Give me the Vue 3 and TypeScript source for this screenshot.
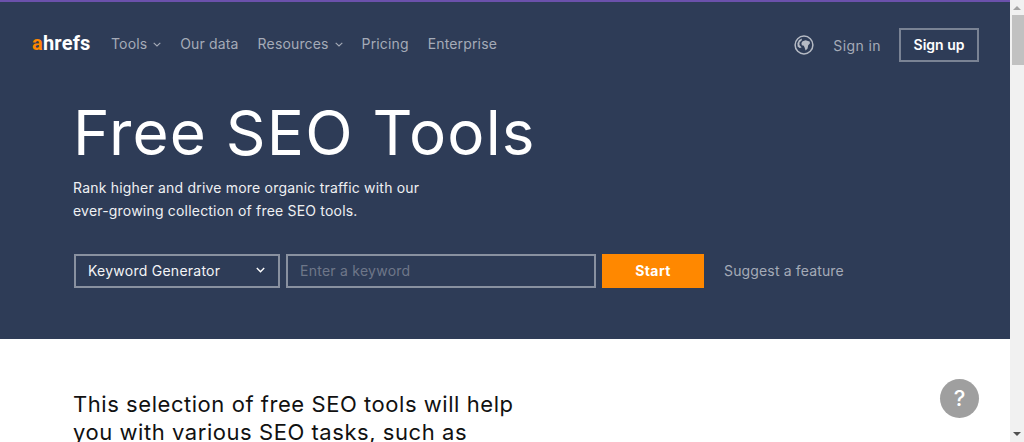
<script setup lang="ts">
const navItems = [
	{ label: "Tools", caret: true },
	{ label: "Our data", caret: false },
	{ label: "Resources", caret: true },
	{ label: "Pricing", caret: false },
	{ label: "Enterprise", caret: false },
];
</script>

<template>
	<div class="window">
		<main class="page">
			<section class="hero">
				<header class="nav">
					<a class="logo"><span class="logo-a">a</span>hrefs</a>
					<nav class="links">
						<a v-for="item in navItems" :key="item.label" class="link">
							{{ item.label }}
							<svg v-if="item.caret" class="caret" width="8" height="5" viewBox="0 0 8 5">
								<path d="M.7.8 4 4 7.3.8" fill="none" stroke="currentColor" stroke-width="1.1" />
							</svg>
						</a>
					</nav>
					<div class="account">
						<svg class="globe" width="20" height="20" viewBox="0 0 20 20">
							<circle cx="10" cy="10" r="8.9" fill="none" stroke="#b5bac4" stroke-width="1.5" />
							<path d="M3.4 8.2 5 5 8 3.6 7.6 5.6 5.6 7.2 5.4 10 7.6 12.4 5.6 13 3.6 11.4Z" fill="#b5bac4" />
							<path d="M8.6 6.2 11.6 5.2 15.6 6.4 16 8.2 14.2 10.2 13.6 13.4 11.6 15.6 10.6 12.6 9.8 10.8 7.8 10.2 7.4 8Z" fill="#b5bac4" />
						</svg>
						<a class="sign-in">Sign in</a>
						<a class="sign-up">Sign up</a>
					</div>
				</header>
				<div class="intro">
					<h1>Free SEO Tools</h1>
					<p>Rank higher and drive more organic traffic with our<br />ever-growing collection of free SEO tools.</p>
					<form class="search" @submit.prevent>
						<div class="select">
							<span>Keyword Generator</span>
							<svg width="9" height="6" viewBox="0 0 9 6">
								<path d="M.8 1 4.500 4.700 8.200 1" fill="none" stroke="#fff" stroke-width="1.4" />
							</svg>
						</div>
						<input class="keyword" type="text" placeholder="Enter a keyword" />
						<button class="start" type="button">Start</button>
						<a class="suggest">Suggest a feature</a>
					</form>
				</div>
			</section>
			<section class="content">
				<h2>This selection of free SEO tools will help you with various SEO tasks, such as</h2>
			</section>
			<button class="help" type="button">?</button>
		</main>
		<aside class="scrollbar">
			<span class="arrow up"></span>
			<span class="thumb"></span>
			<span class="track"></span>
			<span class="arrow down"></span>
		</aside>
	</div>
</template>

<style scoped>
.window {
	display: flex;
	height: 442px;
	overflow: hidden;
	background: #fff;
	font-family: Inter, "Liberation Sans", sans-serif;
}
.page {
	position: relative;
	flex: 1;
	min-width: 0;
	overflow: hidden;
}
.hero {
	height: 337px;
	background: #2e3c57;
	border-top: 2px solid #6b51ab;
}
.nav {
	display: flex;
	align-items: center;
	height: 82px;
	padding: 0 31px 0 32px;
}
.logo {
	width: 79px;
	color: #fff;
	font: 700 20px/1 Roboto, sans-serif;
	letter-spacing: 0.2px;
}
.logo-a {
	color: #ff8800;
}
.links {
	display: flex;
	gap: 19px;
}
.link {
	display: flex;
	align-items: center;
	gap: 6px;
	color: #a5abb7;
	font-size: 14px;
	letter-spacing: 0.15px;
}
.caret {
	margin-top: 2px;
}
.account {
	display: flex;
	align-items: center;
	margin-top: 4px;
	margin-left: auto;
}
.globe {
	margin-right: 19px;
}
.sign-in {
	margin-right: 18px;
	color: #a5abb7;
	font-size: 14px;
	letter-spacing: 0.4px;
}
.sign-up {
	width: 80px;
	height: 34px;
	box-sizing: border-box;
	border: 2px solid #7a8394;
	color: #fff;
	font-size: 14px;
	font-weight: 600;
	line-height: 30px;
	text-align: center;
}
.intro {
	padding: 10px 0 0 73px;
}
h1 {
	margin: 0;
	color: #fff;
	font-size: 62px;
	font-weight: 400;
	line-height: 78px;
	letter-spacing: 1.2px;
}
p {
	margin: 4px 0 0;
	color: #eef0f3;
	font-size: 14px;
	line-height: 23px;
	letter-spacing: 0.2px;
}
.search {
	display: flex;
	align-items: center;
	margin: 32px 0 0 1px;
}
.select,
.keyword {
	height: 34px;
	box-sizing: border-box;
	border: 2px solid #8991a0;
	background: transparent;
	font: 14px Inter, "Liberation Sans", sans-serif;
	letter-spacing: 0.25px;
}
.select {
	display: flex;
	align-items: center;
	justify-content: space-between;
	width: 206px;
	margin-right: 6px;
	padding: 0 13px 2px 12px;
	color: #f3f4f6;
}
.keyword {
	width: 310px;
	margin-right: 6px;
	padding: 0 12px 2px;
	color: #fff;
	outline: none;
}
.keyword::placeholder {
	color: #6e7789;
	opacity: 1;
}
.start {
	width: 102px;
	height: 34px;
	padding: 0 0 2px;
	border: 0;
	background: #ff8800;
	color: #fff;
	font: 700 14px Inter, "Liberation Sans", sans-serif;
	letter-spacing: 0.4px;
}
.suggest {
	margin: -2px 0 0 20px;
	color: #a5abb7;
	font-size: 14px;
	letter-spacing: 0.15px;
}
.content {
	padding: 51px 0 0 73px;
}
h2 {
	width: 460px;
	margin: 0;
	color: #111;
	font-size: 22px;
	font-weight: 400;
	line-height: 28px;
	letter-spacing: 0.55px;
}
.help {
	position: absolute;
	top: 379px;
	left: 940px;
	width: 39px;
	height: 39px;
	padding: 0;
	border: 0;
	border-radius: 50%;
	background: #9f9f9f;
	color: #fff;
	font: 500 22px/39px Inter, sans-serif;
}
.scrollbar {
	display: flex;
	flex-direction: column;
	width: 14px;
	background: #f1f1f1;
}
.arrow {
	position: relative;
	height: 15px;
}
.arrow::after {
	content: "";
	position: absolute;
	left: 3px;
	border-left: 4px solid transparent;
	border-right: 4px solid transparent;
}
.up::after {
	top: 6px;
	border-bottom: 4px solid #a3a3a3;
}
.down::after {
	top: 5px;
	border-top: 4px solid #505050;
}
.thumb {
	height: 50px;
	margin-left: 2px;
	background: #c1c1c1;
}
.track {
	flex: 1;
}
</style>

<style>
html,
body {
	overflow: hidden;
}
</style>
